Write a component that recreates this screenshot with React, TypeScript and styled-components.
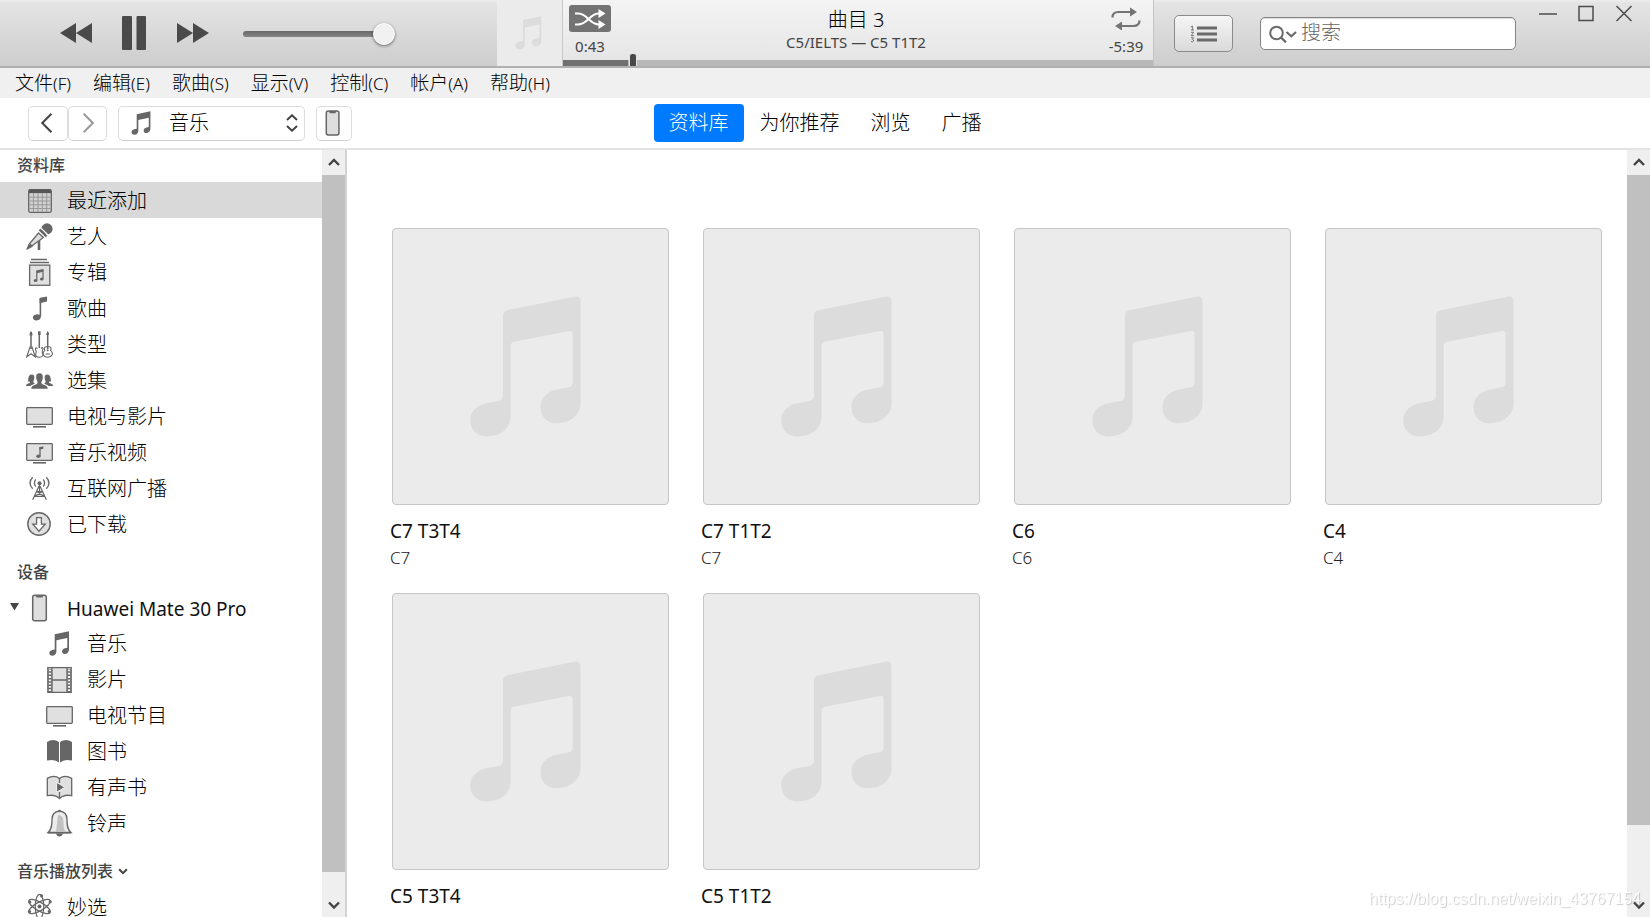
import React from "react";
import styled, { createGlobalStyle } from "styled-components";

const GlobalStyle = createGlobalStyle`
  * { box-sizing: border-box; }
  body { margin: 0; }
  body, button, input, select {
    font-family: "Noto Sans", "Noto Sans CJK SC", sans-serif;
    font-weight: 300;
    color: #000;
  }
  button { padding: 0; border: 0; background: none; }
  svg { display: block; flex: none; }
`;

const App = styled.div`
  display: flex;
  flex-direction: column;
  height: 100vh;
  overflow: hidden;
  background: #fff;
`;

/* ---------- Player bar ---------- */

const Player = styled.header`
  flex: none;
  display: grid;
  grid-template-columns: 497px minmax(0, 1fr) 496px;
  height: 68px;
  border-bottom: 2px solid #b0b0b0;
  background: linear-gradient(#ededed 0, #e4e4e4 3px, #cdcdcd 100%);
`;

const Transport = styled.div`
  display: flex;
  align-items: center;
  padding-left: 60px;
`;

const TransportButton = styled.button<{ $gap: number }>`
  margin-right: ${(p) => p.$gap}px;
`;

const Volume = styled.input`
  appearance: none;
  width: 152px;
  height: 24px;
  margin: 2px 0 0;
  background: none;

  &::-webkit-slider-runnable-track {
    height: 6px;
    border-radius: 3px;
    background: linear-gradient(#686868, #858585);
  }
  &::-webkit-slider-thumb {
    appearance: none;
    width: 22px;
    height: 22px;
    margin-top: -8px;
    border: 1px solid #fff;
    border-radius: 50%;
    background: #f1f1f1;
    box-shadow: 0 1px 3px rgba(0, 0, 0, 0.5);
  }
`;

const Display = styled.section`
  display: grid;
  grid-template-columns: 66px minmax(0, 1fr);
  border-right: 1px solid #c4c4c4;
  background: linear-gradient(#f4f4f4, #e4e4e4);
`;

const DisplayArt = styled.div`
  border-right: 1px solid #c8c8c8;
  background: #ebebeb;
`;

const DisplayBody = styled.div`
  display: flex;
  flex-direction: column;
  min-width: 0;
`;

const TrackRow = styled.div`
  display: grid;
  grid-template-columns: 54px minmax(0, 1fr) 54px;
  height: 60px;
`;

const TrackSide = styled.div`
  display: flex;
  flex-direction: column;
  align-items: center;
  gap: 4px;
  padding-top: 5px;
`;

const TrackTime = styled.span`
  font-size: 15px;
  font-weight: 400;
  line-height: 20px;
  color: #444;
`;

const ShuffleButton = styled.button`
  display: grid;
  place-items: center;
  width: 42px;
  height: 27px;
  border-radius: 3px;
  background: #737373;
`;

const RepeatButton = styled.button`
  display: grid;
  place-items: center;
  width: 42px;
  height: 27px;
`;

const TrackText = styled.div`
  display: flex;
  flex-direction: column;
  align-items: center;
  padding: 8px 4px 0 0;
`;

const TrackTitle = styled.div`
  font-size: 20px;
  line-height: 24px;
`;

const TrackAlbum = styled.div`
  font-size: 15px;
  font-weight: 400;
  line-height: 20px;
  color: #444;
`;

const Progress = styled.input<{ $played: number }>`
  appearance: none;
  display: block;
  width: 100%;
  height: 6px;
  margin: 0;
  background: linear-gradient(
    90deg,
    #707070 ${(p) => p.$played}%,
    #b8b8b8 ${(p) => p.$played}%
  );

  &::-webkit-slider-runnable-track {
    height: 6px;
  }
  &::-webkit-slider-thumb {
    appearance: none;
    width: 8px;
    height: 12px;
    margin-top: -6px;
    border: 1px solid #e4e4e4;
    border-width: 0 1px;
    border-radius: 3px 3px 0 0;
    background: #484848;
  }
`;

const PlayerTools = styled.div`
  display: flex;
  align-items: flex-start;
  padding: 15px 17px 0 20px;
`;

const UpNextButton = styled.button`
  display: grid;
  place-items: center;
  width: 59px;
  height: 37px;
  border: 1px solid #8a8a8a;
  border-radius: 5px;
  background: linear-gradient(#f6f6f6, #dadada);
`;

const SearchBox = styled.label`
  display: flex;
  align-items: center;
  gap: 4px;
  width: 256px;
  height: 33px;
  margin: 2px 0 0 27px;
  padding: 0 8px;
  border: 1px solid #858585;
  border-radius: 5px;
  background: #fff;
  box-shadow: inset 0 1px 1px rgba(0, 0, 0, 0.15);
`;

const SearchInput = styled.input`
  flex: 1;
  min-width: 0;
  padding: 0 0 2px;
  border: 0;
  outline: 0;
  background: none;
  font-size: 20px;
  line-height: 28px;

  &::placeholder {
    color: #666;
    opacity: 1;
  }
`;

const WindowButtons = styled.div`
  display: flex;
  gap: 20px;
  margin: -10px 0 0 auto;
`;

const WindowButton = styled.button`
  height: 18px;
`;

/* ---------- Menu and navigation ---------- */

const MenuBar = styled.nav`
  flex: none;
  display: flex;
  gap: 22px;
  height: 30px;
  padding-left: 15px;
  background: #f0f0f0;
`;

const MenuItem = styled.button`
  font-size: 19px;
  line-height: 28px;
  white-space: nowrap;
`;

const MenuKey = styled.span`
  font-size: 17px;
`;

const NavBar = styled.div`
  flex: none;
  display: grid;
  grid-template-columns: minmax(0, 1fr) auto minmax(0, 1fr);
  align-items: center;
  height: 52px;
  border-bottom: 2px solid #e3e3e3;
`;

const NavTools = styled.div`
  display: flex;
  align-items: center;
  padding-left: 28px;
`;

const NavButton = styled.button<{ $width: number; $gap?: number }>`
  display: grid;
  place-items: center;
  width: ${(p) => p.$width}px;
  height: 35px;
  margin-right: ${(p) => p.$gap ?? 0}px;
  border: 1px solid #dcdcdc;
  border-bottom-color: #cfcfcf;
  border-radius: 5px;
`;

const MediaPicker = styled.label`
  display: grid;
  grid-template-columns: 12px 24px 1fr 14px 4px;
  align-items: center;
  width: 187px;
  height: 35px;
  margin-right: 11px;
  border: 1px solid #dcdcdc;
  border-bottom-color: #cfcfcf;
  border-radius: 5px;

  svg { grid-row: 1; }
  svg:first-child { grid-column: 2; }
  svg:last-child { grid-column: 4; }
`;

const MediaSelect = styled.select`
  grid-row: 1;
  grid-column: 1 / -1;
  appearance: none;
  height: 33px;
  padding: 0 0 2px 50px;
  border: 0;
  background: none;
  font-size: 20px;
`;

const Tabs = styled.nav`
  display: flex;
  gap: 1px;
`;

const Tab = styled.a<{ $active?: boolean }>`
  height: 38px;
  padding: 0 15px;
  border-radius: 4px;
  background: ${(p) => (p.$active ? "#007aff" : "transparent")};
  color: ${(p) => (p.$active ? "#fff" : "#000")};
  font-size: 20px;
  line-height: 38px;
  text-decoration: none;
  white-space: nowrap;
`;

/* ---------- Panes ---------- */

const Panes = styled.div`
  flex: 1;
  display: grid;
  grid-template-columns: 347px minmax(0, 1fr);
  min-height: 0;
`;

const Sidebar = styled.aside`
  display: flex;
  min-height: 0;
  border-right: 2px solid #d2d2d2;
`;

const Library = styled.main`
  display: flex;
  min-width: 0;
  min-height: 0;
`;

const PaneContent = styled.div`
  flex: 1;
  min-width: 0;
  overflow: hidden;
`;

const ScrollTrack = styled.div`
  flex: none;
  display: flex;
  flex-direction: column;
  width: 23px;
  background: #efefef;
`;

const ScrollButton = styled.button`
  display: grid;
  place-items: center;
  height: 25px;
`;

const ScrollThumb = styled.div<{ $shown: number }>`
  flex: ${(p) => p.$shown};
  background: #c0c0c0;
`;

const ScrollRest = styled.div<{ $hidden: number }>`
  flex: ${(p) => p.$hidden};
`;

const SideHeading = styled.h2<{ $spaced?: boolean }>`
  display: flex;
  align-items: center;
  gap: 4px;
  height: ${(p) => (p.$spaced ? 48 : 32)}px;
  margin: 0;
  padding: ${(p) => (p.$spaced ? "12px 0 0" : "0 0 2px")};
  padding-left: 17px;
  color: #444;
  font-size: 16px;
  font-weight: 500;
  line-height: 24px;
`;

const SideList = styled.ul`
  margin: 0;
  padding: 0;
  list-style: none;
`;

const SideItem = styled.a<{ $active?: boolean; $nested?: boolean }>`
  display: flex;
  align-items: center;
  gap: 14px;
  height: 36px;
  padding-left: ${(p) => (p.$nested ? 46 : 26)}px;
  background: ${(p) => (p.$active ? "#d9d9d9" : "transparent")};
  color: #000;
  font-size: 20px;
  text-decoration: none;
  white-space: nowrap;
`;

const SideLabel = styled.span`
  padding-top: 2px;
  line-height: 28px;
`;

const DeviceRow = styled.div`
  display: flex;
  align-items: center;
  gap: 7px;
  height: 35px;
  padding-left: 10px;
`;

const DeviceLink = styled.a`
  display: flex;
  align-items: center;
  gap: 14px;
  color: #111;
  font-size: 19px;
  font-weight: 400;
  text-decoration: none;
`;

const AlbumGrid = styled.div`
  display: grid;
  grid-template-columns: repeat(auto-fill, minmax(260px, 1fr));
  gap: 22px 32px;
  padding: 78px 25px 22px 43px;
`;

const AlbumCard = styled.article`
  min-width: 0;
`;

const AlbumArt = styled.div`
  aspect-ratio: 1;
  margin: 0 0 12px 2px;
  border: 1px solid #c6c6c6;
  border-radius: 4px;
  background: #ebebeb;
`;

const AlbumTitle = styled.h3`
  margin: 0;
  color: #111;
  font-size: 19px;
  font-weight: 400;
  line-height: 28px;
`;

const AlbumArtist = styled.p`
  margin: 0;
  color: #222;
  font-size: 17px;
  line-height: 26px;
`;

const Watermark = styled.div`
  position: fixed;
  right: 9px;
  bottom: 9px;
  color: rgba(255, 255, 255, 0.85);
  font-family: "Liberation Sans", sans-serif;
  font-size: 16px;
  line-height: 18px;
  text-shadow: 1px 1px 1px rgba(0, 0, 0, 0.2);
  pointer-events: none;
`;

/* ---------- Icons ---------- */

const G = "#666";
const F = "#e0e0e0";

const NOTE =
  "M369 300Q369 288 383 285L588 244Q603 243 603 258V565C603 600 575 626 530 626C500 626 482 604 482 577C482 548 505 530 530 525L567 518Q579 515 579 503V355Q579 346 568 348L402 380Q392 382 392 393V605C392 640 365 666 318 666C290 666 270 645 270 618C270 590 290 572 318 566L355 559Q369 556 369 543Z";

const ArtNote = () => (
  <svg width="100%" height="100%" viewBox="37 40 830 830">
    <path d={NOTE} fill="#dcdcdc" />
  </svg>
);

const Icon = ({ children }: { children: React.ReactNode }) => (
  <svg width="27" height="28" viewBox="0 0 27 28" fill="none" stroke={G} strokeWidth="1.3">
    {children}
  </svg>
);

const pairNote =
  "M8.7 5.3L23 2.3V20.5C23 23 21 25 18.8 25C17 25 16 24 16 22.5C16 20.5 17.5 19.3 21.3 18.7V9L10.4 11.3V22.5C10.4 25 8.5 26.7 6.3 26.7C4.5 26.7 3.3 25.8 3.3 24.2C3.3 22.3 4.7 21.2 8.7 20.6Z";

const icons = {
  recent: (
    <Icon>
      <rect x="2.7" y="3.7" width="22.6" height="22.6" rx="1.5" fill="#d0d0d0" />
      <path d="M3.5 11.2H24.5M3.5 15H24.5M3.5 18.8H24.5M3.5 22.5H24.5M7.5 7V26M12 7V26M16.3 7V26M20.7 7V26" stroke="#999" strokeWidth="1" />
      <path d="M3 5.3H25" stroke="#555" strokeWidth="3.6" />
    </Icon>
  ),
  artist: (
    <Icon>
      <path d="M13 16V28" strokeWidth="2.6" />
      <path d="M12.5 11L17.4 15.5L5 24.5L1.5 26.5L3 22.3Z" fill={F} />
      <path d="M1 27L4.5 22.5L6 24.3Z" fill={G} />
      <circle cx="21" cy="6.9" r="5.6" fill={G} stroke="none" />
      <path d="M13.5 7.5L20.5 14.5" stroke={G} strokeWidth="2.4" />
      <path d="M15.3 6.3L22 13" stroke="#fff" strokeWidth="1.2" />
    </Icon>
  ),
  album: (
    <Icon>
      <path d="M5 1.5H21M4 4.5H23" />
      <rect x="3.6" y="7.1" width="20.2" height="20.2" fill={F} />
      <path d="M10.8 22V13L17 11.8V20.4" strokeWidth="1.2" />
      <path d="M10.8 14L17 12.7" strokeWidth="2.4" />
      <ellipse cx="9.6" cy="22.4" rx="1.9" ry="1.5" fill={G} stroke="none" />
      <ellipse cx="15.8" cy="20.9" rx="1.9" ry="1.5" fill={G} stroke="none" />
    </Icon>
  ),
  song: (
    <Icon>
      <path d="M14.4 22.5V4" strokeWidth="1.6" />
      <path d="M13.6 4.5Q14 3.6 15.5 3.5L21 2.6V7.4L13.6 9.2Z" fill={G} stroke="none" />
      <ellipse cx="10.8" cy="23.4" rx="4" ry="2.9" transform="rotate(-14 10.8 23.4)" fill={G} stroke="none" />
    </Icon>
  ),
  genre: (
    <Icon>
      <path d="M5 2V19M13.3 2V18M21.7 2V19" strokeWidth="1.5" />
      <path d="M3.6 3.5L5 1L6.4 3.5V5.5H3.6ZM12 1.2H14.6V5H12ZM20.3 4L21.7 1L23 4V5H20.3Z" fill={G} stroke="none" />
      <path d="M4.2 16.5L.7 27L5 23.8L9.3 27L5.8 16.5" strokeWidth="1.1" />
      <path d="M11.6 18.5Q9.2 16.7 9.5 19.3C9.9 21 11 21.5 9.9 23C8.7 26 10.8 27.4 13.3 27.2C16.5 27.3 17.8 25.3 16.4 22.9C15.5 21.5 16.9 20.4 17 18.3C16.5 17 15.8 17.6 15 18.6" strokeWidth="1.1" />
      <path d="M20.2 16.8C18 17.1 18.1 19 18.9 20.4C17.3 21.6 16.7 23.6 17.6 25.4C19.4 27.9 24 27.9 25.8 25.4C26.8 23.6 26 21.6 24.5 20.4C25.4 19 25.4 17.1 23.2 16.8Z" strokeWidth="1.1" />
      <circle cx="21.7" cy="20.3" r="1" fill={G} stroke="none" />
      <path d="M19.7 24H23.7" strokeWidth="1.1" />
    </Icon>
  ),
  people: (
    <Icon>
      <g fill={G} stroke="none">
        <path d="M13.5 7.2C16.2 7.2 17.1 9 16.8 12C16.6 14 15.7 15 15.4 16.3C15.3 18.2 17 18.5 19.5 19.5C21 20.1 21.6 21 21.7 22.7H5.3C5.4 21 6 20.1 7.5 19.5C10 18.5 11.7 18.2 11.6 16.3C11.3 15 10.4 14 10.2 12C9.9 9 10.8 7.2 13.5 7.2Z" />
        <path d="M5.5 8.6C8 8.6 8.6 10 8.3 12.3C8.2 14 7.5 14.8 7.2 15.8L8.7 17.8L6.5 18.7Q5 19.3 4.5 20H0C.1 17.8 1.3 17.8 4 16.7L3.7 15.5H1.8C2.6 13 1.9 9 5.5 8.6Z" />
        <path d="M21.5 8.6C19 8.6 18.4 10 18.7 12.3C18.8 14 19.5 14.8 19.8 15.8L18.3 17.8L20.5 18.7Q22 19.3 22.5 20H27C26.9 17.8 25.7 17.8 23 16.7L23.3 15.5H25.2C24.4 13 25.1 9 21.5 8.6Z" />
      </g>
    </Icon>
  ),
  tv: (
    <Icon>
      <rect x=".7" y="5.7" width="25.6" height="16.6" rx=".8" fill={F} />
      <path d="M7 24.8H20" strokeWidth="1.6" />
    </Icon>
  ),
  video: (
    <Icon>
      <rect x=".7" y="5.7" width="25.6" height="16.6" rx=".8" fill={F} />
      <path d="M7 24.8H20" strokeWidth="1.6" />
      <path d="M14 18V9" />
      <path d="M13.4 9.2L17.3 8.3V10.8L13.4 11.8Z" fill={G} stroke="none" />
      <ellipse cx="12.4" cy="18.3" rx="2.2" ry="1.7" fill={G} stroke="none" />
    </Icon>
  ),
  radio: (
    <Icon>
      <circle cx="13.5" cy="9.2" r="2" fill={G} stroke="none" />
      <path d="M13.5 10V20M13 12L6.7 25.7M14 12L20.3 25.7M10.7 17.5L18.5 22.5M16.3 17.5L8.5 22.5M10.5 17.5H16.5M8.5 22.3H18.5" strokeWidth="1.2" />
      <path d="M9.7 5.3Q7.2 9 9.7 12.7M17.3 5.3Q19.8 9 17.3 12.7M6.7 3.3Q1.3 9 6.7 14.7M20.3 3.3Q25.7 9 20.3 14.7" />
    </Icon>
  ),
  download: (
    <Icon>
      <circle cx="13" cy="14" r="11.2" fill={F} strokeWidth="1.4" />
      <path d="M10.6 7.7H15.4V14.2H19.2L13 21.2L6.8 14.2H10.6Z" fill="#fff" />
    </Icon>
  ),
  phone: (
    <Icon>
      <rect x="6.7" y="1.2" width="13.6" height="25.6" rx="2" fill="#dedede" strokeWidth="1.5" />
      <path d="M9.5 1H17.5L16.5 3.4H10.5Z" fill={G} stroke="none" />
    </Icon>
  ),
  music: (
    <Icon>
      <path d={pairNote} fill={G} stroke="none" />
    </Icon>
  ),
  film: (
    <Icon>
      <rect x="1.8" y="2.6" width="23.4" height="24.8" fill={F} />
      <path d="M6 3V27M21 3V27M6 15H21" />
      <path d="M3.9 4V27M23.1 4V27" stroke={G} strokeWidth="3.4" />
      <path d="M3.9 4.5V27M23.1 4.5V27" stroke="#fff" strokeWidth="2" strokeDasharray="1.8 1.5" />
    </Icon>
  ),
  book: (
    <Icon>
      <path d="M1 5Q7 .8 13 5V25.6Q9 21.6 1 23.6ZM14 5Q20 .8 26 5V23.6Q18 21.6 14 25.6Z" fill={G} stroke="none" />
    </Icon>
  ),
  audiobook: (
    <Icon>
      <path d="M1.3 5.4Q8 1.2 13.5 5.4Q19 1.2 25.7 5.4V22.7Q18 21 13.5 25.6Q9 21 1.3 22.7Z" fill={F} />
      <path d="M13.5 5.4V10M13.5 19V25" />
      <path d="M10.6 9.3L18.8 14.3L10.6 19.3Z" fill={G} stroke="#f4f4f4" strokeWidth="1" />
    </Icon>
  ),
  bell: (
    <Icon>
      <path d="M13.5 2C18.5 2.5 21 6 21 10.5C21 17 21.5 20.5 25 23.5H2C5.5 20.5 6 17 6 10.5C6 6 8.5 2.5 13.5 2Z" fill="#ececec" />
      <path d="M12 6C16 6 17.5 9 17.5 13C17.5 18 18 20 19.5 23H10Z" fill="#c2c2c2" stroke="none" />
      <path d="M2 23.8H25" strokeWidth="1.5" />
      <path d="M9.7 24.6H17.3Q16 27.5 13.5 27.5Q11 27.5 9.7 24.6Z" fill={G} stroke="none" />
      <circle cx="13.5" cy="2" r="1.3" fill={G} stroke="none" />
    </Icon>
  ),
  genius: (
    <Icon>
      <g strokeWidth="1.2">
        <ellipse cx="13.5" cy="13.5" rx="4.2" ry="12.2" />
        <ellipse cx="13.5" cy="13.5" rx="4.2" ry="12.2" transform="rotate(60 13.5 13.5)" />
        <ellipse cx="13.5" cy="13.5" rx="4.2" ry="12.2" transform="rotate(-60 13.5 13.5)" />
      </g>
      <g fill={G} stroke="none">
        <circle cx="13.5" cy="13.5" r="2" />
        <circle cx="15.5" cy="2.8" r="1.6" />
        <circle cx="3.8" cy="9" r="1.6" />
        <circle cx="24.2" cy="8.8" r="1.6" />
        <circle cx="3.5" cy="18.5" r="1.6" />
        <circle cx="23.2" cy="18.5" r="1.6" />
      </g>
    </Icon>
  ),
};

const Chevron = ({ d, size = 14, color = "#444", weight = 2 }: { d: string; size?: number; color?: string; weight?: number }) => (
  <svg width={size} height={size} viewBox="0 0 14 14" fill="none" stroke={color} strokeWidth={weight}>
    <path d={d} />
  </svg>
);

/* ---------- Data ---------- */

type IconName = keyof typeof icons;

const menus = [
  ["文件", "F"], ["编辑", "E"], ["歌曲", "S"], ["显示", "V"],
  ["控制", "C"], ["帐户", "A"], ["帮助", "H"],
];

const tabs = ["资料库", "为你推荐", "浏览", "广播"];

const libraryItems: [IconName, string][] = [
  ["recent", "最近添加"], ["artist", "艺人"], ["album", "专辑"], ["song", "歌曲"],
  ["genre", "类型"], ["people", "选集"], ["tv", "电视与影片"], ["video", "音乐视频"],
  ["radio", "互联网广播"], ["download", "已下载"],
];

const deviceItems: [IconName, string][] = [
  ["music", "音乐"], ["film", "影片"], ["tv", "电视节目"],
  ["book", "图书"], ["audiobook", "有声书"], ["bell", "铃声"],
];

const albums: { title: string; artist?: string }[] = [
  { title: "C7 T3T4", artist: "C7" },
  { title: "C7 T1T2", artist: "C7" },
  { title: "C6", artist: "C6" },
  { title: "C4", artist: "C4" },
  { title: "C5 T3T4" },
  { title: "C5 T1T2" },
];

/* ---------- Parts ---------- */

const ScrollBar = ({ shown, hidden }: { shown: number; hidden: number }) => (
  <ScrollTrack>
    <ScrollButton aria-label="向上滚动">
      <Chevron d="M2 9L7 4L12 9" weight={2.4} />
    </ScrollButton>
    <ScrollThumb $shown={shown} />
    <ScrollRest $hidden={hidden} />
    <ScrollButton aria-label="向下滚动">
      <Chevron d="M2 4.5L7 9.5L12 4.5" weight={2.4} />
    </ScrollButton>
  </ScrollTrack>
);

const PlayerBar = () => (
  <Player>
    <Transport>
      <TransportButton $gap={30} aria-label="上一首">
        <svg width="32" height="20" viewBox="0 0 32 20" fill="#4a4a4a">
          <path d="M0 10L16 0V20ZM16 10L32 0V20Z" />
        </svg>
      </TransportButton>
      <TransportButton $gap={31} aria-label="暂停">
        <svg width="24" height="34" viewBox="0 0 24 34" fill="#4a4a4a">
          <rect width="10" height="34" rx="1" />
          <rect x="14.5" width="9.5" height="34" rx="1" />
        </svg>
      </TransportButton>
      <TransportButton $gap={34} aria-label="下一首">
        <svg width="32" height="20" viewBox="0 0 32 20" fill="#4a4a4a">
          <path d="M32 10L16 0V20ZM16 10L0 0V20Z" />
        </svg>
      </TransportButton>
      <Volume type="range" min={0} max={100} defaultValue={100} aria-label="音量" />
    </Transport>
    <Display>
      <DisplayArt>
        <ArtNote />
      </DisplayArt>
      <DisplayBody>
        <TrackRow>
          <TrackSide>
            <ShuffleButton aria-label="随机播放">
              <svg width="32" height="20" viewBox="0 0 32 20" fill="none" stroke="#fff" strokeWidth="2.2">
                <path d="M1 4.5H4C14 4.5 15 15.5 25 15.5M1 15.5H4C14 15.5 15 4.5 25 4.5" />
                <path d="M24.5 0L31.5 4.5L24.5 9ZM24.5 11L31.5 15.5L24.5 20Z" fill="#fff" stroke="none" />
              </svg>
            </ShuffleButton>
            <TrackTime>0:43</TrackTime>
          </TrackSide>
          <TrackText>
            <TrackTitle>曲目 3</TrackTitle>
            <TrackAlbum>C5/IELTS — C5 T1T2</TrackAlbum>
          </TrackText>
          <TrackSide>
            <RepeatButton aria-label="重复播放">
              <svg width="30" height="24" viewBox="0 0 30 24" fill="none" stroke="#737373" strokeWidth="2.2">
                <path d="M1.5 10.5C1.5 6.5 3.5 5 7.5 5H20M28.5 13.5C28.5 17.5 26.5 19 22.5 19H10" />
                <path d="M19 .5L26 5L19 9.5ZM11 14.5L4 19L11 23.5Z" fill="#737373" stroke="none" />
              </svg>
            </RepeatButton>
            <TrackTime>-5:39</TrackTime>
          </TrackSide>
        </TrackRow>
        <Progress type="range" min={0} max={382} defaultValue={43} $played={11} aria-label="播放进度" />
      </DisplayBody>
    </Display>
    <PlayerTools>
      <UpNextButton aria-label="待播清单">
        <svg width="28" height="18" viewBox="0 0 28 18" fill="none" stroke="#6a6a6a">
          <path d="M7 3H27M7 9H27M7 15H27" strokeWidth="3" />
          <path d="M.8 2L2.4 1V5M1 5H4M1 7.3H3.6L1.2 10.7H4M1 12.8H3.6L2.4 14.4Q3.8 14.6 3.6 16Q3 17.2 1 16.6" strokeWidth=".9" />
        </svg>
      </UpNextButton>
      <SearchBox>
        <svg width="28" height="18" viewBox="0 0 28 18" fill="none" stroke="#6a6a6a" strokeWidth="2">
          <circle cx="7.5" cy="8" r="6.3" />
          <path d="M12 12.5L17 17.3" strokeWidth="2.4" />
          <path d="M17.5 7L22.3 11.3L27 7" strokeWidth="2.2" />
        </svg>
        <SearchInput type="text" placeholder="搜索" aria-label="搜索" />
      </SearchBox>
      <WindowButtons>
        <WindowButton aria-label="最小化">
          <svg width="18" height="18" viewBox="0 0 18 18" stroke="#4c4c4c" strokeWidth="1.5">
            <path d="M0 9H18" />
          </svg>
        </WindowButton>
        <WindowButton aria-label="最大化">
          <svg width="18" height="18" viewBox="0 0 18 18" fill="none" stroke="#4c4c4c" strokeWidth="1.5">
            <rect x="2" y="1.5" width="14" height="14" />
          </svg>
        </WindowButton>
        <WindowButton aria-label="关闭">
          <svg width="18" height="18" viewBox="0 0 18 18" stroke="#4c4c4c" strokeWidth="1.5">
            <path d="M1.5 1L16.5 16M16.5 1L1.5 16" />
          </svg>
        </WindowButton>
      </WindowButtons>
    </PlayerTools>
  </Player>
);

const Navigation = () => (
  <NavBar>
    <NavTools>
      <NavButton $width={40} aria-label="后退">
        <Chevron d="M9.4 .5L3 7L9.4 13.5" size={20} weight={1.4} />
      </NavButton>
      <NavButton $width={39} $gap={11} aria-label="前进">
        <Chevron d="M4 .5L10.4 7L4 13.5" size={20} weight={1.4} color="#999" />
      </NavButton>
      <MediaPicker>
        <svg width="20" height="24" viewBox="3 2 20.4 25">
          <path d={pairNote} fill={G} />
        </svg>
        <MediaSelect aria-label="媒体类型" defaultValue="音乐">
          <option>音乐</option>
        </MediaSelect>
        <svg width="12" height="18" viewBox="0 0 12 18" fill="none" stroke="#444" strokeWidth="2">
          <path d="M1 6L6 1.3L11 6M1 12L6 16.7L11 12" />
        </svg>
      </MediaPicker>
      <NavButton $width={36} aria-label="设备">
        <svg width="18" height="26" viewBox="0 0 19 28">
          <rect x="1.2" y="1.2" width="13.6" height="25.6" rx="2" fill="#dedede" stroke={G} strokeWidth="1.6" />
          <path d="M4 1H12L11 3.4H5Z" fill={G} />
        </svg>
      </NavButton>
    </NavTools>
    <Tabs>
      {tabs.map((name, i) => (
        <Tab key={name} href="#" $active={i === 0}>{name}</Tab>
      ))}
    </Tabs>
  </NavBar>
);

export default function MusicLibrary() {
  return (
    <App>
      <GlobalStyle />
      <PlayerBar />
      <MenuBar>
        {menus.map(([name, key]) => (
          <MenuItem key={key}>{name}<MenuKey>({key})</MenuKey></MenuItem>
        ))}
      </MenuBar>
      <Navigation />
      <Panes>
        <Sidebar>
          <PaneContent>
            <SideHeading>资料库</SideHeading>
            <SideList>
              {libraryItems.map(([icon, name], i) => (
                <li key={name}>
                  <SideItem href="#" $active={i === 0}>
                    {icons[icon]}
                    <SideLabel>{name}</SideLabel>
                  </SideItem>
                </li>
              ))}
            </SideList>
            <SideHeading $spaced>设备</SideHeading>
            <DeviceRow>
              <button aria-label="折叠设备">
                <svg width="9" height="14" viewBox="0 0 9 14" fill="#444">
                  <path d="M0 2H9L4.5 9.5Z" />
                </svg>
              </button>
              <DeviceLink href="#">
                {icons.phone}
                <SideLabel>Huawei Mate 30 Pro</SideLabel>
              </DeviceLink>
            </DeviceRow>
            <SideList>
              {deviceItems.map(([icon, name]) => (
                <li key={name}>
                  <SideItem href="#" $nested>
                    {icons[icon]}
                    <SideLabel>{name}</SideLabel>
                  </SideItem>
                </li>
              ))}
            </SideList>
            <SideHeading $spaced>
              音乐播放列表
              <Chevron d="M2.5 5L7 9.5L11.5 5" size={12} weight={2.4} />
            </SideHeading>
            <SideItem href="#">
              {icons.genius}
              <SideLabel>妙选</SideLabel>
            </SideItem>
          </PaneContent>
          <ScrollBar shown={697} hidden={20} />
        </Sidebar>
        <Library>
          <PaneContent>
            <AlbumGrid>
              {albums.map(({ title, artist }) => (
                <AlbumCard key={title}>
                  <AlbumArt><ArtNote /></AlbumArt>
                  <AlbumTitle>{title}</AlbumTitle>
                  {artist && <AlbumArtist>{artist}</AlbumArtist>}
                </AlbumCard>
              ))}
            </AlbumGrid>
          </PaneContent>
          <ScrollBar shown={650} hidden={67} />
        </Library>
      </Panes>
      <Watermark>https://blog.csdn.net/weixin_43767154</Watermark>
    </App>
  );
}
